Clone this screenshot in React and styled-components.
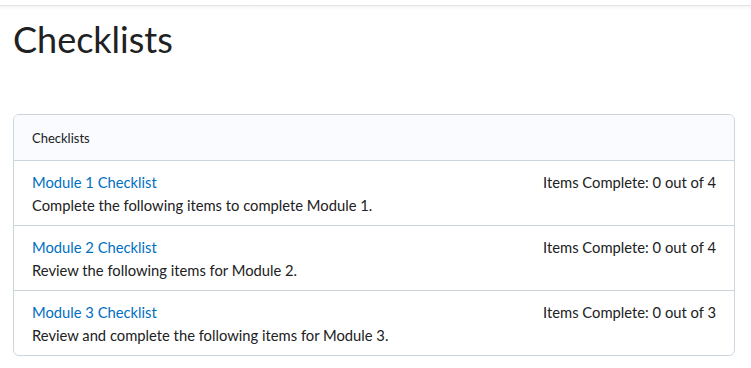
import styled, { createGlobalStyle } from 'styled-components';

const GlobalStyle = createGlobalStyle`
  body {
    margin: 0;
    background: #fff;
    font-family: Lato, "Open Sans", sans-serif;
    color: #202122;
  }
`;

const checklists = [
  { name: 'Module 1 Checklist', description: 'Complete the following items to complete Module 1.', done: 0, total: 4 },
  { name: 'Module 2 Checklist', description: 'Review the following items for Module 2.', done: 0, total: 4 },
  { name: 'Module 3 Checklist', description: 'Review and complete the following items for Module 3.', done: 0, total: 3 },
];

const App = () => {
  return (
    <>
      <GlobalStyle />
      <TopBar />
      <Page>
        <Title>Checklists</Title>
        <Card>
          <CardHeader>Checklists</CardHeader>
          {checklists.map((c) => (
            <Row key={c.name}>
              <RowTop>
                <ChecklistLink href="#">{c.name}</ChecklistLink>
                <Progress>Items Complete: {c.done} out of {c.total}</Progress>
              </RowTop>
              <Description>{c.description}</Description>
            </Row>
          ))}
        </Card>
      </Page>
    </>
  );
};

const TopBar = styled.div`
  height: 5px;
  border-bottom: 1px solid #e3e4e5;
  background: #fff;
  position: relative;

  &::after {
    content: '';
    position: absolute;
    left: 0;
    right: 0;
    top: 6px;
    height: 4px;
    background: linear-gradient(#f6f6f6, #fff);
  }
`;

const Page = styled.main`
  padding: 0 16px 0 13px;
`;

const Title = styled.h1`
  margin: 12px 0 0;
  font-size: 36px;
  font-weight: 400;
  line-height: 42px;
  color: #202122;
`;

const Card = styled.section`
  margin-top: 54px;
  border: 1px solid #cdd5dc;
  border-radius: 6px;
  overflow: hidden;
`;

const CardHeader = styled.div`
  height: 45px;
  display: flex;
  align-items: center;
  padding: 0 18px;
  background: #f9fbff;
  font-size: 13px;
  color: #202122;
`;

const Row = styled.div`
  border-top: 1px solid #cdd5dc;
  padding: 12px 18px 0;
  box-sizing: border-box;
  height: 65px;
`;

const RowTop = styled.div`
  display: flex;
  justify-content: space-between;
  align-items: baseline;
`;

const ChecklistLink = styled.a`
  color: #006fbf;
  text-decoration: none;
  font-size: 14.75px;
  line-height: 18px;
`;

const Progress = styled.span`
  font-size: 14.75px;
  line-height: 18px;
  color: #202122;
`;

const Description = styled.div`
  margin-top: 5px;
  font-size: 14.75px;
  line-height: 18px;
  color: #202122;
`;

export default App;
